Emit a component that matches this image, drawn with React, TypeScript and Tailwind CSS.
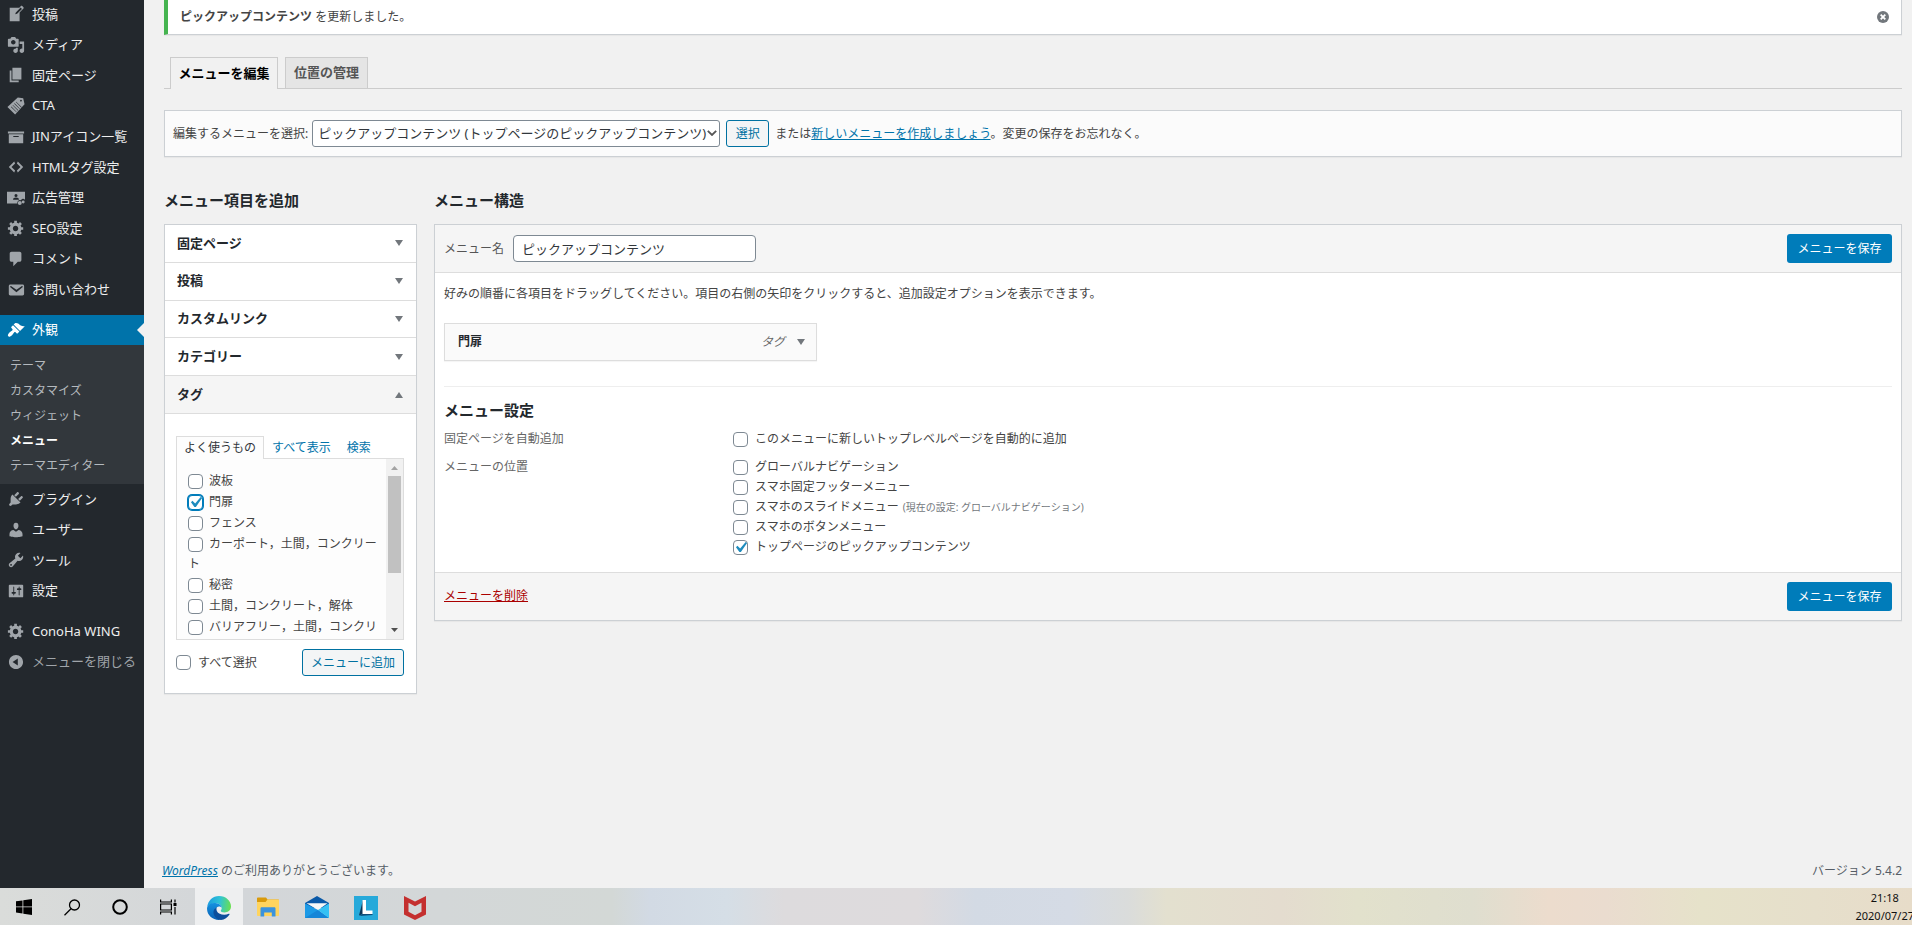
import type { ReactNode } from "react";

const icons = {
  post: "M16.89 1.2l1.41 1.41c.39.39.39 1.02 0 1.41L14 8.33V18H3V3h10.67l1.8-1.8c.4-.39 1.03-.4 1.42 0zm-5.66 8.48l5.37-5.36-1.42-1.42-5.36 5.37-.71 2.12z",
  media: "M13 11V4c0-.55-.45-1-1-1h-1.67L9 1H5L3.67 3H2c-.55 0-1 .45-1 1v7c0 .55.45 1 1 1h10c.55 0 1-.45 1-1zM7 4.5c1.38 0 2.5 1.12 2.5 2.5S8.38 9.5 7 9.5 4.5 8.38 4.5 7 5.62 4.5 7 4.5zM14 6h5v10.5c0 1.38-1.12 2.5-2.5 2.5S14 17.88 14 16.5s1.12-2.5 2.5-2.5c.17 0 .34.02.5.05V9h-3V6zm-4 8.05V13h2v3.5c0 1.38-1.12 2.5-2.5 2.5S7 17.88 7 16.5 8.12 14 9.5 14c.17 0 .34.02.5.05z",
  page: "M6 15V2h10v13H6zm-1 1h8v2H3V5h2v11z",
  cta: "M12 .5l6 1 1.500 6.500L9 19.500.5 11zM15.500 3a1 1 0 1 0 .1 2 1 1 0 0 0-.1-2zM10.200 5.200l-.4.4 6 6 .4-.4zM8.400 7l-.4.4 6 6 .4-.4zM6.600 8.800l-.4.4 6 6 .4-.4zM4.800 10.600l-.4.4 6 6 .4-.4z",
  archive: "M19 4v2H1V4h18zM2 7h16v10H2V7zm11 3V9H7v1h6z",
  code: "M9 6l-4 4 4 4-1 2-6-6 6-6zm2 8l4-4-4-4 1-2 6 6-6 6z",
  ads: "M0 3h20v9a3 3 0 0 0-4.500.5A3 3 0 0 0 11.500 16H0zM10 5.500a1.700 1.700 0 1 0 0 3.400 1.700 1.700 0 0 0 0-3.400zM6.700 12h6.600c0-1.600-1.300-2.500-3.300-2.500s-3.300.9-3.300 2.500zM14.200 13.400a2.200 2.200 0 1 1 0 4.400 2.200 2.200 0 0 1 0-4.400zM18 12.800a1.600 1.600 0 1 1 0 3.200 1.600 1.600 0 0 1 0-3.200z",
  gear: "M18 12h-2.180c-.17.7-.44 1.350-.81 1.930l1.540 1.540-2.100 2.100-1.540-1.540c-.58.36-1.230.63-1.910.79V19H8v-2.180c-.68-.16-1.330-.43-1.910-.79l-1.540 1.540-2.120-2.120 1.540-1.540c-.36-.58-.63-1.230-.79-1.910H1V9.030h2.170c.16-.7.44-1.350.8-1.940L2.430 5.550l2.100-2.100 1.540 1.540c.58-.37 1.240-.64 1.930-.81V2h3v2.180c.68.16 1.330.43 1.910.79l1.540-1.540 2.120 2.120-1.540 1.540c.36.59.64 1.240.8 1.940H18V12zm-8.500 1.500c1.660 0 3-1.340 3-3s-1.340-3-3-3-3 1.340-3 3 1.340 3 3 3z",
  comment: "M5 2h9c1.100 0 2 .9 2 2v7c0 1.100-.9 2-2 2h-2l-5 5v-5H5c-1.100 0-2-.9-2-2V4c0-1.100.9-2 2-2z",
  mail: "M3.870 4h13.250C18.370 4 19 4.590 19 5.790v8.420c0 1.190-.63 1.790-1.880 1.790H3.870c-1.250 0-1.880-.6-1.880-1.790V5.790c0-1.200.63-1.790 1.880-1.790zm6.620 8.600l6.740-5.530c.24-.2.43-.66.13-1.070-.29-.41-.82-.42-1.170-.17l-5.700 3.860L4.800 5.830c-.35-.25-.88-.24-1.170.17-.3.41-.11.87.13 1.070z",
  brush: "M14.480 11.060L7.410 3.990l1.500-1.500c.5-.56 2.300-.47 3.510.32 1.210.8 1.430 1.280 2.910 2.100 1.180.64 2.450 1.260 4.450.85zm-.71.71L6.700 4.700 4.930 6.470c-.39.39-.39 1.020 0 1.410l1.060 1.060c.39.39.39 1.030 0 1.420-.6.6-1.430 1.110-2.210 1.690-.35.26-.7.53-1.010.84C1.430 14.230.4 16.080 1.400 17.070c.99 1 2.840-.03 4.180-1.360.31-.31.58-.66.85-1.020.57-.78 1.080-1.610 1.690-2.210.39-.39 1.020-.39 1.410 0l1.060 1.060c.39.39 1.020.39 1.410 0z",
  plugin: "M13.110 4.360L9.870 7.600 8 5.730l3.240-3.240c.35-.34 1.050-.2 1.560.32.52.51.66 1.210.31 1.550zm-8 1.770l.91-1.120 9.010 9.010-1.190.84c-.71.71-2.630 1.160-3.820 1.160H6.140L4.900 17.260c-.59.59-1.540.59-2.120 0-.59-.58-.59-1.530 0-2.120l1.240-1.240v-3.880c0-1.130.4-3.190 1.090-3.890zm7.260 3.970l3.240-3.240c.34-.35 1.040-.21 1.550.31.52.51.66 1.210.31 1.550l-3.240 3.250z",
  user: "M10 9.250c-2.270 0-2.730-3.440-2.730-3.440C7 4.020 7.820 2 9.970 2c2.160 0 2.980 2.020 2.710 3.810 0 0-.41 3.440-2.680 3.440zm0 2.570L12.720 10c2.390 0 4.520 2.330 4.520 4.530v2.490s-3.650 1.130-7.240 1.130c-3.650 0-7.240-1.130-7.240-1.130v-2.490c0-2.250 1.940-4.480 4.470-4.480z",
  tool: "M16.680 9.770c-1.340 1.340-3.300 1.670-4.950.99l-5.410 6.520c-.99.99-2.590.99-3.580 0s-.99-2.590 0-3.570l6.520-5.420c-.68-1.650-.35-3.610.99-4.950 1.280-1.280 3.120-1.620 4.720-1.060l-2.890 2.890 2.820 2.820 2.860-2.870c.53 1.580.18 3.390-1.080 4.650zM3.810 16.210c.4.39 1.040.39 1.430 0 .4-.4.4-1.040 0-1.430-.39-.4-1.030-.4-1.430 0-.39.39-.39 1.030 0 1.430z",
  sliders: "M18 16V4c0-.55-.45-1-1-1H3c-.55 0-1 .45-1 1v12c0 .55.45 1 1 1h14c.55 0 1-.45 1-1zM8 11h1c.55 0 1 .45 1 1s-.45 1-1 1H8v1.500c0 .28-.22.5-.5.5s-.5-.22-.5-.5V13H6c-.55 0-1-.45-1-1s.45-1 1-1h1V5.500c0-.28.22-.5.5-.5s.5.22.5.5V11zm5-2h-1c-.55 0-1-.45-1-1s.45-1 1-1h1V5.500c0-.28.22-.5.5-.5s.5.22.5.5V7h1c.55 0 1 .45 1 1s-.45 1-1 1h-1v5.500c0 .28-.22.5-.5.5s-.5-.22-.5-.5V9z",
  collapse: "M10 2.160c4.330 0 7.840 3.510 7.840 7.840S14.330 17.840 10 17.840 2.160 14.330 2.160 10 5.710 2.160 10 2.160zm2 11.720V6.120L6.180 9.970z",
};

type IconName = keyof typeof icons;
type Item = { icon: IconName; label: string; muted?: boolean };

const topItems: Item[] = [
  { icon: "post", label: "投稿" },
  { icon: "media", label: "メディア" },
  { icon: "page", label: "固定ページ" },
  { icon: "cta", label: "CTA" },
  { icon: "archive", label: "JINアイコン一覧" },
  { icon: "code", label: "HTMLタグ設定" },
  { icon: "ads", label: "広告管理" },
  { icon: "gear", label: "SEO設定" },
  { icon: "comment", label: "コメント" },
  { icon: "mail", label: "お問い合わせ" },
];

const bottomItems: Item[] = [
  { icon: "plugin", label: "プラグイン" },
  { icon: "user", label: "ユーザー" },
  { icon: "tool", label: "ツール" },
  { icon: "sliders", label: "設定" },
];

const lastItems: Item[] = [
  { icon: "gear", label: "ConoHa WING" },
  { icon: "collapse", label: "メニューを閉じる", muted: true },
];

const subItems = ["テーマ", "カスタマイズ", "ウィジェット", "メニュー", "テーマエディター"];

const accordion = ["固定ページ", "投稿", "カスタムリンク", "カテゴリー", "タグ"];

const tags = [
  "波板",
  "門扉",
  "フェンス",
  "カーポート，土間，コンクリート",
  "秘密",
  "土間，コンクリート，解体",
  "バリアフリー，土間，コンクリート",
];

const locations = [
  { label: "グローバルナビゲーション" },
  { label: "スマホ固定フッターメニュー" },
  { label: "スマホのスライドメニュー", note: "(現在の設定: グローバルナビゲーション)" },
  { label: "スマホのボタンメニュー" },
  { label: "トップページのピックアップコンテンツ", checked: true },
];

const Icon = ({ name }: { name: IconName }) => (
  <svg viewBox="0 0 20 20" className="h-[18px] w-[18px] shrink-0" fill="currentColor" fillRule="evenodd" aria-hidden="true">
    <path d={icons[name]} />
  </svg>
);

const Arrow = ({ up = false }: { up?: boolean }) => (
  <svg viewBox="0 0 8 6" className="h-[6px] w-2 shrink-0 fill-[#72777c]" aria-hidden="true">
    <path d={up ? "M0 6L4 0l4 6z" : "M0 0h8L4 6z"} />
  </svg>
);

const Checkbox = ({ id, checked = false, focused = false }: { id: string; checked?: boolean; focused?: boolean }) => (
  <span className="relative inline-block h-[15px] w-[15px] shrink-0 align-middle">
    <input
      id={id}
      type="checkbox"
      defaultChecked={checked}
      className={`peer block h-[15px] w-[15px] appearance-none rounded border bg-white ${
        focused ? "border-[#007cba] ring-1 ring-[#007cba]" : "border-[#7e8993]"
      }`}
    />
    <svg viewBox="3 3 14 14" className="pointer-events-none absolute inset-0 hidden h-[15px] w-[15px] fill-[#1e8cbe] peer-checked:block" aria-hidden="true">
      <path d="M14.830 4.890l1.340.94-5.810 8.380H9.020L5.780 9.670l1.340-1.250 2.570 2.400z" />
    </svg>
  </span>
);

const SaveButton = () => (
  <button type="button" className="h-[29px] w-[105px] rounded-[3px] bg-[#007cba] text-xs text-white">
    メニューを保存
  </button>
);

const NavList = ({ items, className }: { items: Item[]; className: string }) => (
  <ul className={`flex flex-col ${className}`}>
    {items.map((item) => (
      <li key={item.label} className="flex flex-1">
        <a
          href="#"
          className={`flex flex-1 items-center gap-[7px] pl-[7px] text-[13px] whitespace-nowrap ${item.muted ? "text-[#a0a5aa]" : "text-[#eee]"}`}
        >
          <span className="text-[#a0a5aa]">
            <Icon name={item.icon} />
          </span>
          {item.label}
        </a>
      </li>
    ))}
  </ul>
);

const Sidebar = () => (
  <nav className="w-36 shrink-0 bg-[#23282d]">
    <NavList items={topItems} className="-mt-px h-[306px]" />
    <a href="#" className="relative mt-[10px] flex h-[30px] items-center gap-[7px] bg-[#0073aa] pl-[7px] text-[13px] text-white">
      <Icon name="brush" />
      外観
      <span className="absolute top-[8px] right-0 border-y-[7px] border-r-[7px] border-y-transparent border-r-[#f1f1f1]" />
    </a>
    <ul className="bg-[#32373c] pt-2 pb-[6px]">
      {subItems.map((label) => (
        <li key={label}>
          <a
            href="#"
            className={`block pl-[10px] text-xs leading-[25px] ${label === "メニュー" ? "font-bold text-white" : "text-[#b4b9be]"}`}
          >
            {label}
          </a>
        </li>
      ))}
    </ul>
    <NavList items={bottomItems} className="h-[122px]" />
    <NavList items={lastItems} className="mt-[10px] h-[61px]" />
  </nav>
);

const AddItems = () => (
  <section className="w-[253px] shrink-0">
    <h2 className="text-[15px] leading-6 font-bold text-[#23282d]">メニュー項目を追加</h2>
    <div className="mt-3 border border-[#ccd0d4] bg-white shadow-[0_1px_1px_rgba(0,0,0,0.04)]">
      <div className="flex h-[189px] flex-col">
        {accordion.map((label) => (
          <h3 key={label} className="flex flex-1 border-b border-[#ddd]">
            <button
              type="button"
              className={`flex flex-1 items-center justify-between pr-[13px] pl-3 text-[13px] font-bold text-[#23282d] ${label === "タグ" ? "bg-[#f5f5f5]" : ""}`}
            >
              {label}
              <Arrow up={label === "タグ"} />
            </button>
          </h3>
        ))}
      </div>
      <div className="pt-[21px] pr-3 pb-[17px] pl-[11px] text-xs text-[#444]">
        <div className="flex h-[23px] items-end">
          <button type="button" className="relative -mb-px h-[23px] w-[88px] border border-b-0 border-[#ddd] bg-[#fdfdfd] text-[#32373c]">
            よく使うもの
          </button>
          <a href="#" className="ml-2 leading-[21px] text-[#0073aa]">すべて表示</a>
          <a href="#" className="ml-4 leading-[21px] text-[#0073aa]">検索</a>
        </div>
        <div className="flex h-[182px] overflow-hidden border border-[#ddd] bg-[#fdfdfd]">
          <ul className="flex-1 space-y-px pt-3 pl-[11px] leading-5">
            {tags.map((tag, i) => (
              <li key={tag}>
                <label htmlFor={`tag-${i}`}>
                  <span className="mr-[6px] inline-flex h-5 items-center align-top">
                    <Checkbox id={`tag-${i}`} checked={tag === "門扉"} focused={tag === "門扉"} />
                  </span>
                  {tag}
                </label>
              </li>
            ))}
          </ul>
          <div className="flex w-[17px] shrink-0 flex-col items-center bg-[#f1f1f1]">
            <svg viewBox="0 0 17 17" className="h-[17px] w-[17px] shrink-0 fill-[#a3a3a3]" aria-hidden="true">
              <path d="M5 11l3.500-4 3.500 4z" />
            </svg>
            <div className="h-[97px] w-[13px] bg-[#c1c1c1]" />
            <svg viewBox="0 0 17 17" className="mt-auto h-[17px] w-[17px] shrink-0 fill-[#505050]" aria-hidden="true">
              <path d="M5 6l3.500 4L12 6z" />
            </svg>
          </div>
        </div>
        <div className="mt-[9px] flex items-center justify-between">
          <label htmlFor="select-all" className="flex items-center gap-[7px]">
            <Checkbox id="select-all" />
            すべて選択
          </label>
          <button type="button" className="h-[27px] w-[102px] rounded-[3px] border border-[#0071a1] bg-[#f3f5f6] text-[#0071a1]">
            メニューに追加
          </button>
        </div>
      </div>
    </div>
  </section>
);

const SettingRow = ({ title, children }: { title: string; children: ReactNode }) => (
  <fieldset className="flex">
    <legend className="float-left w-[289px] shrink-0 leading-5 text-[#666]">{title}</legend>
    <div className="flex flex-col">{children}</div>
  </fieldset>
);

const MenuStructure = () => (
  <section className="min-w-0 flex-1">
    <h2 className="text-[15px] leading-6 font-bold text-[#23282d]">メニュー構造</h2>
    <div className="mt-3 border border-[#ccd0d4] bg-white text-xs text-[#444] shadow-[0_1px_1px_rgba(0,0,0,0.04)]">
      <div className="flex h-12 items-center justify-between border-b border-[#ddd] bg-[#f5f5f5] px-[9px]">
        <div className="flex items-center gap-[9px]">
          <label htmlFor="menu-name" className="text-[#555]">メニュー名</label>
          <input
            id="menu-name"
            type="text"
            defaultValue="ピックアップコンテンツ"
            className="h-[27px] w-[243px] rounded border border-[#7e8993] bg-white px-2 text-[13px] text-[#32373c]"
          />
        </div>
        <SaveButton />
      </div>
      <div className="px-[9px] pt-[11px] pb-[15px]">
        <p className="leading-5">
          好みの順番に各項目をドラッグしてください。項目の右側の矢印をクリックすると、追加設定オプションを表示できます。
        </p>
        <div className="mt-[19px] flex h-[38px] w-[373px] items-center border border-[#ddd] bg-[#fafafa] pr-[11px] pl-[13px] shadow-[0_1px_1px_rgba(0,0,0,0.04)]">
          <span className="flex-1 font-bold text-[#23282d]">門扉</span>
          <span className="mr-3 text-[#666] italic">タグ</span>
          <Arrow />
        </div>
        <div className="mt-[25px] border-t border-[#eee] pt-[11px]">
          <h3 className="text-[15px] leading-6 font-bold text-[#23282d]">メニュー設定</h3>
          <div className="mt-[7px] flex flex-col gap-2">
            <SettingRow title="固定ページを自動追加">
              <label htmlFor="auto-add" className="flex h-5 items-center gap-[7px]">
                <Checkbox id="auto-add" />
                このメニューに新しいトップレベルページを自動的に追加
              </label>
            </SettingRow>
            <SettingRow title="メニューの位置">
              {locations.map((item, i) => (
                <label key={item.label} htmlFor={`location-${i}`} className="flex h-5 items-center gap-[7px]">
                  <Checkbox id={`location-${i}`} checked={item.checked} />
                  <span>
                    {item.label}
                    {item.note && <span className="ml-1 text-[10px] text-[#72777c]">{item.note}</span>}
                  </span>
                </label>
              ))}
            </SettingRow>
          </div>
        </div>
      </div>
      <div className="flex h-12 items-center justify-between border-t border-[#ddd] bg-[#f5f5f5] px-[9px]">
        <a href="#" className="pb-[2px] text-[#a00] underline">メニューを削除</a>
        <SaveButton />
      </div>
    </div>
  </section>
);

const Taskbar = () => (
  <footer className="flex h-[37px] shrink-0 items-center overflow-hidden bg-[linear-gradient(90deg,#dadcda_0%,#d3d6d9_12%,#d3d7d8_23%,#d3d8d6_32%,#d2dae4_34%,#d5dee6_38%,#dddbdd_41%,#dedbdd_48%,#d3dae4_51%,#d5dbe5_56%,#dadcdb_59%,#e3e0cf_61%,#e4dccf_67%,#e2e1cc_71%,#dfdecf_77%,#ecdccd_81%,#eadccf_84%,#e6e2ca_89%,#e6dfcb_95%,#e7dcc9_100%)]">
    <button type="button" aria-label="スタート" className="flex h-full w-12 items-center justify-center pt-px">
      <svg viewBox="0 0 16 16" className="h-4 w-4">
        <path d="M0 2.300l6.500-.9v6.100H0zM7.300 1.300L16 0v7.500H7.300zM0 8.300h6.500v6.200L0 13.600zM7.300 8.300H16V16l-8.700-1.300z" />
      </svg>
    </button>
    <button type="button" aria-label="検索" className="flex h-full w-12 items-center justify-center pt-px">
      <svg viewBox="0 0 17 17" className="h-[17px] w-[17px]" fill="none" stroke="black" strokeWidth="1.300">
        <circle cx="10.500" cy="6" r="5" />
        <path d="M7 9.800L.5 16.300" />
      </svg>
    </button>
    <button type="button" aria-label="Cortana" className="flex h-full w-12 items-center justify-center pt-px">
      <svg viewBox="0 0 16 16" className="h-4 w-4" fill="none" stroke="black" strokeWidth="2">
        <circle cx="8" cy="8" r="6.800" />
      </svg>
    </button>
    <button type="button" aria-label="タスクビュー" className="flex h-full w-[51px] items-center justify-center pt-px pr-[3px]">
      <svg viewBox="0 0 17 16" className="h-4 w-[17px]" fill="none" stroke="black" strokeWidth="1.200">
        <path d="M.6.500V3h10.800V.500M.6 15.500V13h10.800v2.500M.6 5h10.800v6H.600zM15 .5v3M15 8v7.500" />
        <path d="M13.500 4h3v3h-3z" fill="black" stroke="none" />
      </svg>
    </button>
    <button type="button" aria-label="Edge" className="flex h-full w-12 items-center justify-center bg-[#eeeff0] pt-[2px]">
      <svg viewBox="0 0 24 24" className="h-6 w-6">
        <defs>
          <linearGradient id="edge-top" x1="0" y1="0.500" x2="1" y2="0.600">
            <stop offset="0" stopColor="#1b9de0" />
            <stop offset="0.500" stopColor="#2fc3d6" />
            <stop offset="1" stopColor="#6be04e" />
          </linearGradient>
          <linearGradient id="edge-side" x1="0" y1="0" x2="0" y2="1">
            <stop offset="0" stopColor="#1592e0" />
            <stop offset="1" stopColor="#0c60b4" />
          </linearGradient>
        </defs>
        <path d="M.2 11C1 4.500 5.800 0 12 0c7 0 12 5 12 10.300 0 4-3 6.200-6.400 6.200-2.700 0-3.900-.9-3.900-1.700s1-1 1-2.900c0-2.400-2.400-4.700-5.900-4.700C4.500 7.200 1.500 9 .2 11z" fill="url(#edge-top)" />
        <path d="M.1 11.500C1 8.500 4.500 6.700 8.300 7.100c3.600.3 6.200 2.300 6.400 4.700-1-1.300-3.200-1.600-4.700-.6-2.500 1.600-3.300 5-1.600 8.100 1 1.900 2.800 3.500 5.100 4.600C6 24.800-.8 19 .1 11.500z" fill="url(#edge-side)" />
        <path d="M9.800 11.300c-3 1.600-4.100 4.600-2.700 7.900 1.200 2.700 3.800 4.600 6.900 4.700 3.500-.4 6.700-2.500 8.500-5.500.3-.6-.2-.9-.7-.6-4.500 2-10.300.8-12-2.900-.5-1.300-.5-2.500 0-3.600z" fill="#0d4f9c" />
      </svg>
    </button>
    <button type="button" aria-label="エクスプローラー" className="flex h-full w-[50px] items-center justify-center pt-px">
      <svg viewBox="0 0 22 20" className="h-5 w-[22px]">
        <path d="M0 1.500C0 .6.500.500 1 .500h8l1.500 2H21c.6 0 1 .4 1 1V8H0z" fill="#d99a0b" />
        <path d="M0 5h8.500l2-2.500H21c.6 0 1 .4 1 1V18c0 .6-.4 1-1 1H1c-.6 0-1-.4-1-1z" fill="#ffd45e" />
        <path d="M3.500 19.500v-8c0-.8.500-1.300 1.300-1.300h12.400c.8 0 1.300.5 1.300 1.300v8h-3.700v-4H7.200v4z" fill="#3b93dd" />
      </svg>
    </button>
    <button type="button" aria-label="メール" className="flex h-full w-12 items-center justify-center pt-px">
      <svg viewBox="0 0 24 22" className="h-[22px] w-6">
        <path d="M0 7l12-7 12 7v5H0z" fill="#0a59a8" />
        <path d="M1.500 7.300h21L13 14z" fill="#f5f7f8" />
        <path d="M0 7.500L13 14l11 8H0z" fill="#1c9ae6" />
        <path d="M0 22L13 14l11 8z" fill="#1686d8" />
        <path d="M13 14L24 7.500V22z" fill="#35c1f4" />
      </svg>
    </button>
    <button type="button" aria-label="L" className="flex h-full w-[50px] items-center justify-center pt-[2px]">
      <svg viewBox="0 0 24 24" className="h-6 w-6">
        <path d="M0 0h24v24H0z" fill="#26a9da" />
        <path d="M9 4v14l-4 1.500z" fill="#0b3558" />
        <path d="M8.500 18h10v1l-13 1z" fill="#0f4c78" />
        <path d="M8.500 4h3.500v10.500h6.500v3.500h-10z" fill="#fff" />
      </svg>
    </button>
    <button type="button" aria-label="McAfee" className="flex h-full w-12 items-center justify-center pt-[2px]">
      <svg viewBox="0 0 22 24" className="h-6 w-[22px]">
        <path d="M0 0l11 5.500L22 0v18.500L11 24 0 18.500zM4.500 6.800v9l6.500 3.400 6.500-3.400v-9L11 10.300z" fill="#c4302f" fillRule="evenodd" />
      </svg>
    </button>
    <div className="ml-auto -mr-[2px] pt-px text-center text-[11px] leading-[18px] text-[#111]">
      <div>21:18</div>
      <div>2020/07/27</div>
    </div>
  </footer>
);

export default function App() {
  return (
    <div lang="ja" className="flex min-h-screen flex-col bg-[#f1f1f1] font-['Noto_Sans','Noto_Sans_CJK_JP',sans-serif] text-[#444]">
      <div className="flex flex-1">
        <Sidebar />
        <main className="flex min-w-0 flex-1 flex-col pr-[10px] pl-5">
          <div className="flex h-[35px] items-center justify-between border-r border-b border-l-4 border-[#ccd0d4] border-l-[#46b450] bg-white pr-3 pl-3 text-xs shadow-[0_1px_1px_rgba(0,0,0,0.04)]">
            <p>
              <strong>ピックアップコンテンツ</strong> を更新しました。
            </p>
            <button type="button" aria-label="閉じる">
              <svg viewBox="0 0 12 12" className="h-3 w-3">
                <circle cx="6" cy="6" r="6" fill="#72777c" />
                <path d="M3.700 3.700l4.600 4.600M8.300 3.700L3.700 8.300" stroke="white" strokeWidth="1.800" />
              </svg>
            </button>
          </div>

          <div className="mt-[22px] flex h-8 items-end gap-[7px] border-b border-[#ccc] pl-[6px] text-[13px] font-bold">
            <a href="#" className="-mb-px flex h-8 w-[108px] items-center justify-center border border-b-0 border-[#ccc] bg-[#f1f1f1] text-black">
              メニューを編集
            </a>
            <a href="#" className="flex h-[31px] w-[83px] items-center justify-center border border-b-0 border-[#ccc] bg-[#e5e5e5] text-[#555]">
              位置の管理
            </a>
          </div>

          <div className="mt-[21px] flex h-[47px] items-center border border-[#ccd0d4] bg-[#fbfbfb] px-2 text-xs whitespace-nowrap shadow-[0_1px_1px_rgba(0,0,0,0.04)]">
            <label htmlFor="menu-select">編集するメニューを選択:</label>
            <span className="relative ml-1">
              <select
                id="menu-select"
                className="block h-[27px] w-[408px] appearance-none rounded-[3px] border border-[#7e8993] bg-white pl-[5px] text-[13px] text-[#32373c]"
              >
                <option>ピックアップコンテンツ (トップページのピックアップコンテンツ)</option>
              </select>
              <svg viewBox="0 0 10 6" className="pointer-events-none absolute top-[10px] right-[3px] h-[6px] w-[10px]" fill="none" stroke="#555" strokeWidth="1.800" aria-hidden="true">
                <path d="M.8.800L5 5 9.200.800" />
              </svg>
            </span>
            <button type="button" className="ml-[6px] h-[27px] w-[43px] rounded-[3px] border border-[#0071a1] bg-[#f3f5f6] text-[#0071a1]">
              選択
            </button>
            <p className="ml-[6px]">
              または
              <a href="#" className="text-[#0073aa] underline">新しいメニューを作成しましょう</a>
              。変更の保存をお忘れなく。
            </p>
          </div>

          <div className="mt-[31px] flex items-start gap-[17px]">
            <AddItems />
            <MenuStructure />
          </div>

          <div className="mt-auto -ml-[2px] flex justify-between pb-[7px] text-xs leading-5 text-[#555d66]">
            <p>
              <a href="#" className="text-[#0073aa] italic underline">WordPress</a> のご利用ありがとうございます。
            </p>
            <p>バージョン 5.4.2</p>
          </div>
        </main>
      </div>
      <Taskbar />
    </div>
  );
}
